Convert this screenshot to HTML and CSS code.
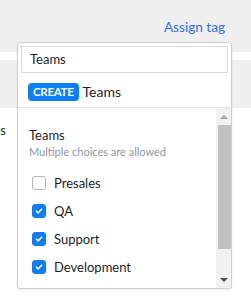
FILE: index.html
```html
<!DOCTYPE html>
<html>
<head>
  <title>Assign tag</title>
  <link rel="stylesheet" href="styles.css">
</head>
<body>
<div class="page">
  <div class="toolbar">
    <a class="assign-link" href="#">Assign tag</a>
  </div>
  <div class="band"></div>
  <div class="subbar"></div>
  <div class="content">
    <div class="side-label"><span>Teams</span></div>
  </div>
</div>

<div class="dropdown">
  <div class="search">
    <div class="search-input">Teams</div>
  </div>
  <div class="create-row">
    <span class="badge">CREATE</span>
    <span class="create-text">Teams</span>
  </div>
  <div class="list-wrap">
    <div class="list">
      <div class="group-title">Teams</div>
      <div class="group-hint">Multiple choices are allowed</div>
      <div class="option"><span class="check"></span><span>Presales</span></div>
      <div class="option"><span class="check checked"><svg viewBox="0 0 14 14"><path d="M4 7.2l2 2 4-4.2" fill="none" stroke="#fff" stroke-width="1.8" stroke-linecap="round" stroke-linejoin="round"/></svg></span><span>QA</span></div>
      <div class="option"><span class="check checked"><svg viewBox="0 0 14 14"><path d="M4 7.2l2 2 4-4.2" fill="none" stroke="#fff" stroke-width="1.8" stroke-linecap="round" stroke-linejoin="round"/></svg></span><span>Support</span></div>
      <div class="option"><span class="check checked"><svg viewBox="0 0 14 14"><path d="M4 7.2l2 2 4-4.2" fill="none" stroke="#fff" stroke-width="1.8" stroke-linecap="round" stroke-linejoin="round"/></svg></span><span>Development</span></div>
      <div class="option"><span class="check"></span></div>
    </div>
    <div class="scrollbar">
      <div class="arrow arrow-up"></div>
      <div class="thumb"></div>
      <div class="track"></div>
      <div class="arrow arrow-down"></div>
    </div>
  </div>
</div>
</body>
</html>
```

FILE: styles.css
```css
:root {
  --primary-color: #0d7ef5;
  --link-color: #2f6ff0;
  --text-color: #1e1e1e;
  --muted-color: #8d98a3;
  --page-gray: #f0f0f0;
  --border-color: #cfcfcf;
}

body {
  margin: 0;
  width: 251px;
  height: 303px;
  overflow: hidden;
  font-family: Lato, "Liberation Sans", sans-serif;
  color: var(--text-color);
  background-color: #ffffff;
}

.page {
  display: flex;
  flex-direction: column;
  height: 303px;
}

.toolbar {
  height: 52px;
  background-color: var(--page-gray);
  display: flex;
  justify-content: flex-end;
  align-items: flex-start;
  padding-right: 26px;
  box-sizing: border-box;
}

.assign-link {
  margin-top: 18px;
  font-size: 13.6px;
  line-height: 18px;
  color: var(--link-color);
  text-decoration: none;
}

.band {
  height: 8px;
  background-color: #ffffff;
}

.subbar {
  height: 48px;
  background-color: var(--page-gray);
}

.content {
  flex: 1;
  padding-top: 13px;
}

.side-label {
  width: 6px;
  overflow: hidden;
  display: flex;
  justify-content: flex-end;
  white-space: nowrap;
  font-size: 13px;
  line-height: 18px;
}

.dropdown {
  position: absolute;
  left: 17px;
  top: 42px;
  width: 215px;
  height: 247px;
  box-sizing: border-box;
  border: 1px solid var(--border-color);
  border-radius: 3px;
  background-color: #ffffff;
  box-shadow: 0 1px 2px rgba(0, 0, 0, 0.08);
  display: flex;
  flex-direction: column;
  overflow: hidden;
}

.search {
  padding: 3px 3px 0 3px;
}

.search-input {
  height: 27px;
  box-sizing: border-box;
  border: 1px solid #dcdcdc;
  padding-left: 8px;
  font-size: 13px;
  line-height: 25px;
}

.create-row {
  height: 35px;
  box-sizing: border-box;
  padding: 10px 0 0 10px;
  border-bottom: 1px solid #e4e4e4;
  display: flex;
  align-items: flex-start;
  gap: 4px;
  flex-shrink: 0;
}

.badge {
  height: 18px;
  padding: 0 5px;
  border-radius: 4px;
  background-color: var(--primary-color);
  color: #ffffff;
  font-size: 11.5px;
  font-weight: 700;
  line-height: 18px;
  letter-spacing: -0.3px;
}

.create-text {
  font-size: 14px;
  line-height: 18px;
}

.list-wrap {
  flex: 1;
  display: flex;
  overflow: hidden;
}

.list {
  flex: 1;
  padding: 18px 0 0 11px;
}

.group-title {
  font-size: 13px;
  line-height: 18px;
}

.group-hint {
  font-size: 11px;
  line-height: 16px;
  color: var(--muted-color);
}

.group-hint + .option {
  margin-top: 9px;
}

.option {
  height: 28px;
  display: flex;
  align-items: center;
  gap: 8px;
  padding-left: 3px;
  font-size: 13px;
}

.check {
  width: 14px;
  height: 14px;
  box-sizing: border-box;
  border: 1px solid #b5b5b5;
  border-radius: 3px;
  background-color: #ffffff;
  display: flex;
}

.check.checked {
  border-color: var(--primary-color);
  background-color: var(--primary-color);
}

.check svg {
  width: 12px;
  height: 12px;
}

.scrollbar {
  width: 15px;
  background-color: #f1f1f1;
  display: flex;
  flex-direction: column;
  align-items: flex-end;
}

.arrow {
  width: 15px;
  height: 17px;
  display: flex;
  justify-content: center;
  align-items: center;
}

.arrow:before {
  content: "";
  width: 0;
  height: 0;
  border-left: 4px solid transparent;
  border-right: 4px solid transparent;
}

.arrow-up:before {
  border-bottom: 4px solid #a3a3a3;
}

.arrow-down:before {
  border-top: 4px solid #505050;
}

.thumb {
  width: 13px;
  height: 124px;
  background-color: #c1c1c1;
}

.track {
  flex: 1;
}
```
